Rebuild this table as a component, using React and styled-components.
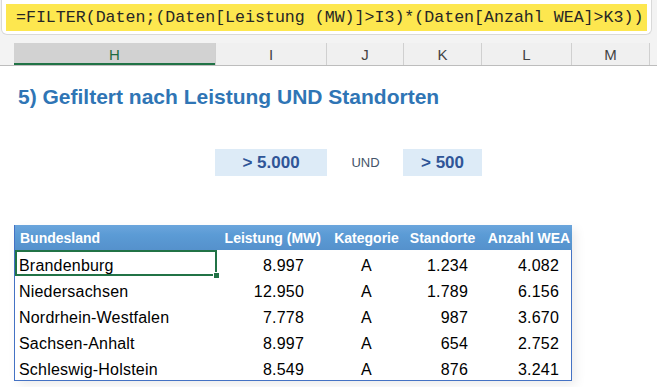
import React from 'react'
import styled, { createGlobalStyle } from 'styled-components'

const GlobalStyle = createGlobalStyle`
  html, body { margin: 0; padding: 0; background: #fff; }
  body { font-family: "Liberation Sans", Arial, sans-serif; }
`

const COLS = '14px 202px 111px 77px 78px 90px 78px 1fr'

const columns = ['H', 'I', 'J', 'K', 'L', 'M']

const rows = [
  ['Brandenburg', '8.997', 'A', '1.234', '4.082'],
  ['Niedersachsen', '12.950', 'A', '1.789', '6.156'],
  ['Nordrhein-Westfalen', '7.778', 'A', '987', '3.670'],
  ['Sachsen-Anhalt', '8.997', 'A', '654', '2.752'],
  ['Schleswig-Holstein', '8.549', 'A', '876', '3.241'],
]

const App = () => {
  return (
    <Page>
      <GlobalStyle />
      <TopArea>
        <FormulaBox>
          <Formula>=FILTER(Daten;(Daten[Leistung (MW)]&gt;I3)*(Daten[Anzahl WEA]&gt;K3))</Formula>
        </FormulaBox>
      </TopArea>
      <ColumnBar>
        <Corner />
        {columns.map((c) => (
          <ColHead key={c} selected={c === 'H'}>{c}</ColHead>
        ))}
        <Corner />
      </ColumnBar>
      <Sheet>
        <Title>5) Gefiltert nach Leistung UND Standorten</Title>
        <InputBox col={3}>&gt; 5.000</InputBox>
        <Und>UND</Und>
        <InputBox col={5}>&gt; 500</InputBox>
        <Table>
          <HeadCell align="left" pad="0 0 0 5px">Bundesland</HeadCell>
          <HeadCell align="right" pad="0 7px 0 0">Leistung (MW)</HeadCell>
          <HeadCell align="center">Kategorie</HeadCell>
          <HeadCell align="center" pad="0 3px 0 0">Standorte</HeadCell>
          <HeadCell align="center" pad="0 0 0 3px">Anzahl WEA</HeadCell>
          {rows.map((r, i) => (
            <React.Fragment key={r[0]}>
              <Cell align="left" pad="6px 0 0 4px" active={i === 0}>
                {r[0]}
                {i === 0 && <Handle />}
              </Cell>
              <Cell align="right" pad="6px 24px 0 0">{r[1]}</Cell>
              <Cell align="center" pad="6px 0 0 0">{r[2]}</Cell>
              <Cell align="right" pad="6px 15px 0 0">{r[3]}</Cell>
              <Cell align="right" pad="6px 13px 0 0">{r[4]}</Cell>
            </React.Fragment>
          ))}
        </Table>
      </Sheet>
    </Page>
  )
}

export default App

const Page = styled.div`
  width: 657px;
  height: 387px;
  overflow: hidden;
  background: #fff;
`

const TopArea = styled.div`
  background: #f3f3f3;
  padding: 0 5px 8px 1px;
`

const FormulaBox = styled.div`
  background: #fff;
  border: 1px solid #d9d9d9;
  border-top: none;
  border-radius: 0 0 6px 6px;
  padding: 4px 4px 3px 4px;
`

const Formula = styled.span`
  display: inline-block;
  background: #fde74f;
  font-family: "Liberation Mono", "DejaVu Sans Mono", monospace;
  font-size: 16.6px;
  line-height: 27px;
  color: #262626;
  padding: 0 4px 0 10px;
  white-space: nowrap;
`

const ColumnBar = styled.div`
  display: grid;
  grid-template-columns: ${COLS};
  height: 22px;
  background: #f3f3f3;
  border-bottom: 1px solid #bdbdbd;
`

const Corner = styled.div`
  background: #f3f3f3;
`

const ColHead = styled.div`
  display: flex;
  align-items: center;
  justify-content: center;
  font-family: "Liberation Sans", Arial, sans-serif;
  font-size: 15px;
  color: ${(p) => (p.selected ? '#1d6b40' : '#444')};
  background: ${(p) => (p.selected ? '#d2d2d2' : '#f0f0f0')};
  border-right: 1px solid #d0d0d0;
  box-shadow: ${(p) => (p.selected ? 'inset 0 -2px 0 #217346' : 'none')};
`

const Sheet = styled.div`
  display: grid;
  grid-template-columns: ${COLS};
  grid-template-rows: auto auto auto;
  padding-top: 18px;
`

const Title = styled.h1`
  grid-column: 2 / -1;
  margin: 0 0 39px 4px;
  font-family: "Liberation Sans", Arial, sans-serif;
  font-size: 21px;
  font-weight: 700;
  line-height: 26px;
  color: #2f75b5;
  white-space: nowrap;
`

const InputBox = styled.div`
  grid-column: ${(p) => p.col};
  grid-row: 2;
  height: 27px;
  margin-left: -1px;
  display: flex;
  align-items: center;
  justify-content: center;
  background: #ddebf7;
  font-size: 17px;
  font-weight: 700;
  color: #2f5597;
`

const Und = styled.div`
  grid-column: 4;
  grid-row: 2;
  display: flex;
  align-items: center;
  justify-content: center;
  font-size: 13px;
  color: #44546a;
`

const Table = styled.div`
  grid-column: 2 / 7;
  grid-row: 3;
  margin-top: 49px;
  display: grid;
  grid-template-columns: 202px 111px 77px 78px 89px;
  grid-auto-rows: 26px;
  grid-template-rows: 25px;
  border: 1px solid #4472c4;
  border-top: none;
  box-shadow: 4px 4px 10px rgba(0, 0, 0, 0.08);
`

const HeadCell = styled.div`
  display: flex;
  align-items: center;
  justify-content: ${(p) => (p.align === 'left' ? 'flex-start' : p.align === 'right' ? 'flex-end' : 'center')};
  padding: ${(p) => p.pad || '0'};
  background: linear-gradient(#6ba5dc, #5b9bd5 40%, #5591cc);
  color: #fff;
  font-size: 14px;
  font-weight: 700;
  white-space: nowrap;
`

const Cell = styled.div`
  position: relative;
  display: flex;
  align-items: center;
  justify-content: ${(p) => (p.align === 'left' ? 'flex-start' : p.align === 'right' ? 'flex-end' : 'center')};
  padding: ${(p) => p.pad || '0'};
  font-size: 16px;
  letter-spacing: 0.2px;
  color: #000;
  white-space: nowrap;
  box-shadow: ${(p) => (p.active ? 'inset 0 0 0 2px #217346' : 'none')};
`

const Handle = styled.span`
  position: absolute;
  right: -3px;
  bottom: -3px;
  width: 5px;
  height: 5px;
  background: #217346;
  border: 1px solid #fff;
`
